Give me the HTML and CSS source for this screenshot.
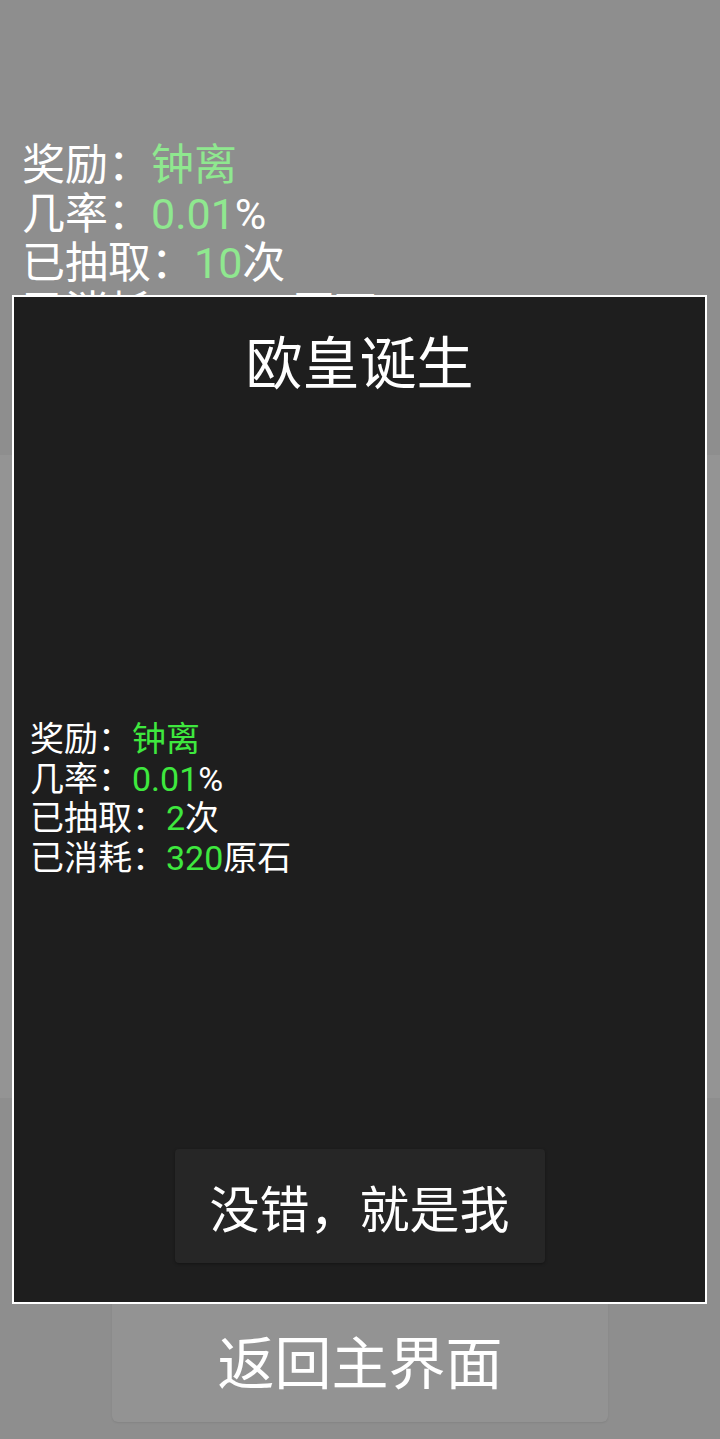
FILE: index.html
```html
<!DOCTYPE html>
<html lang="zh">
<head>
<meta charset="utf-8">
<title>欧皇诞生</title>
<link rel="stylesheet" href="styles.css">
</head>
<body>
<main class="screen">
  <section class="stats stats--bg">
    <div class="stat">奖励：<span class="hl">钟离</span></div>
    <div class="stat">几率：<span class="hl">0.01</span>%</div>
    <div class="stat">已抽取：<span class="hl">10</span>次</div>
    <div class="stat">已消耗：<span class="hl">1600</span>原石</div>
  </section>
  <section class="panel"></section>
  <div class="footer">
    <button class="home-btn">返回主界面</button>
  </div>
</main>

<div class="dialog">
  <h1 class="dialog-title">欧皇诞生</h1>
  <section class="stats stats--dlg">
    <div class="stat">奖励：<span class="hl">钟离</span></div>
    <div class="stat">几率：<span class="hl">0.01</span>%</div>
    <div class="stat">已抽取：<span class="hl">2</span>次</div>
    <div class="stat">已消耗：<span class="hl">320</span>原石</div>
  </section>
  <button class="confirm-btn">没错，就是我</button>
</div>
</body>
</html>
```
FILE: styles.css
```css
* { box-sizing: border-box; }
html, body {
  margin: 0;
  padding: 0;
}
body {
  width: 720px;
  height: 1439px;
  overflow: hidden;
  background: #8e8e8e;
  font-family: "Roboto", "Noto Sans CJK SC", sans-serif;
  color: #ffffff;
  position: relative;
}
.screen {
  display: flex;
  flex-direction: column;
}
.stats--bg {
  padding: 141px 0 0 22px;
  font-size: 43px;
  line-height: 49px;
}
.stats--bg .hl { color: #8fe88f; }
.stat { white-space: nowrap; }
.panel {
  margin-top: 118px;
  height: 643px;
  background: #949494;
}
.footer {
  display: flex;
  justify-content: center;
  margin-top: 198px;
}
.home-btn {
  width: 496px;
  height: 126px;
  border: none;
  border-radius: 6px;
  background: #939393;
  color: #ffffff;
  font-family: "Roboto", "Noto Sans CJK SC", sans-serif;
  font-size: 57px;
  padding: 0;
  box-shadow: 0 1px 2px rgba(0,0,0,0.08);
}

.dialog {
  position: absolute;
  left: 12px;
  top: 295px;
  width: 695px;
  height: 1009px;
  border: 2px solid #ffffff;
  background: #1e1e1e;
  display: flex;
  flex-direction: column;
  align-items: stretch;
}
.dialog-title {
  margin: 34px 0 0;
  font-size: 57px;
  font-weight: 400;
  line-height: 67px;
  text-align: center;
}
.stats--dlg {
  margin-top: 322px;
  padding-left: 16px;
  font-size: 34px;
  line-height: 39.5px;
}
.stats--dlg .hl { color: #3ee83e; }
.confirm-btn {
  margin: auto auto 39px;
  width: 370px;
  height: 114px;
  border: none;
  border-radius: 4px;
  background: #262626;
  color: #ffffff;
  font-family: "Roboto", "Noto Sans CJK SC", sans-serif;
  font-size: 50px;
  padding: 0;
  box-shadow: 0 1px 3px rgba(0,0,0,0.35);
}
```
